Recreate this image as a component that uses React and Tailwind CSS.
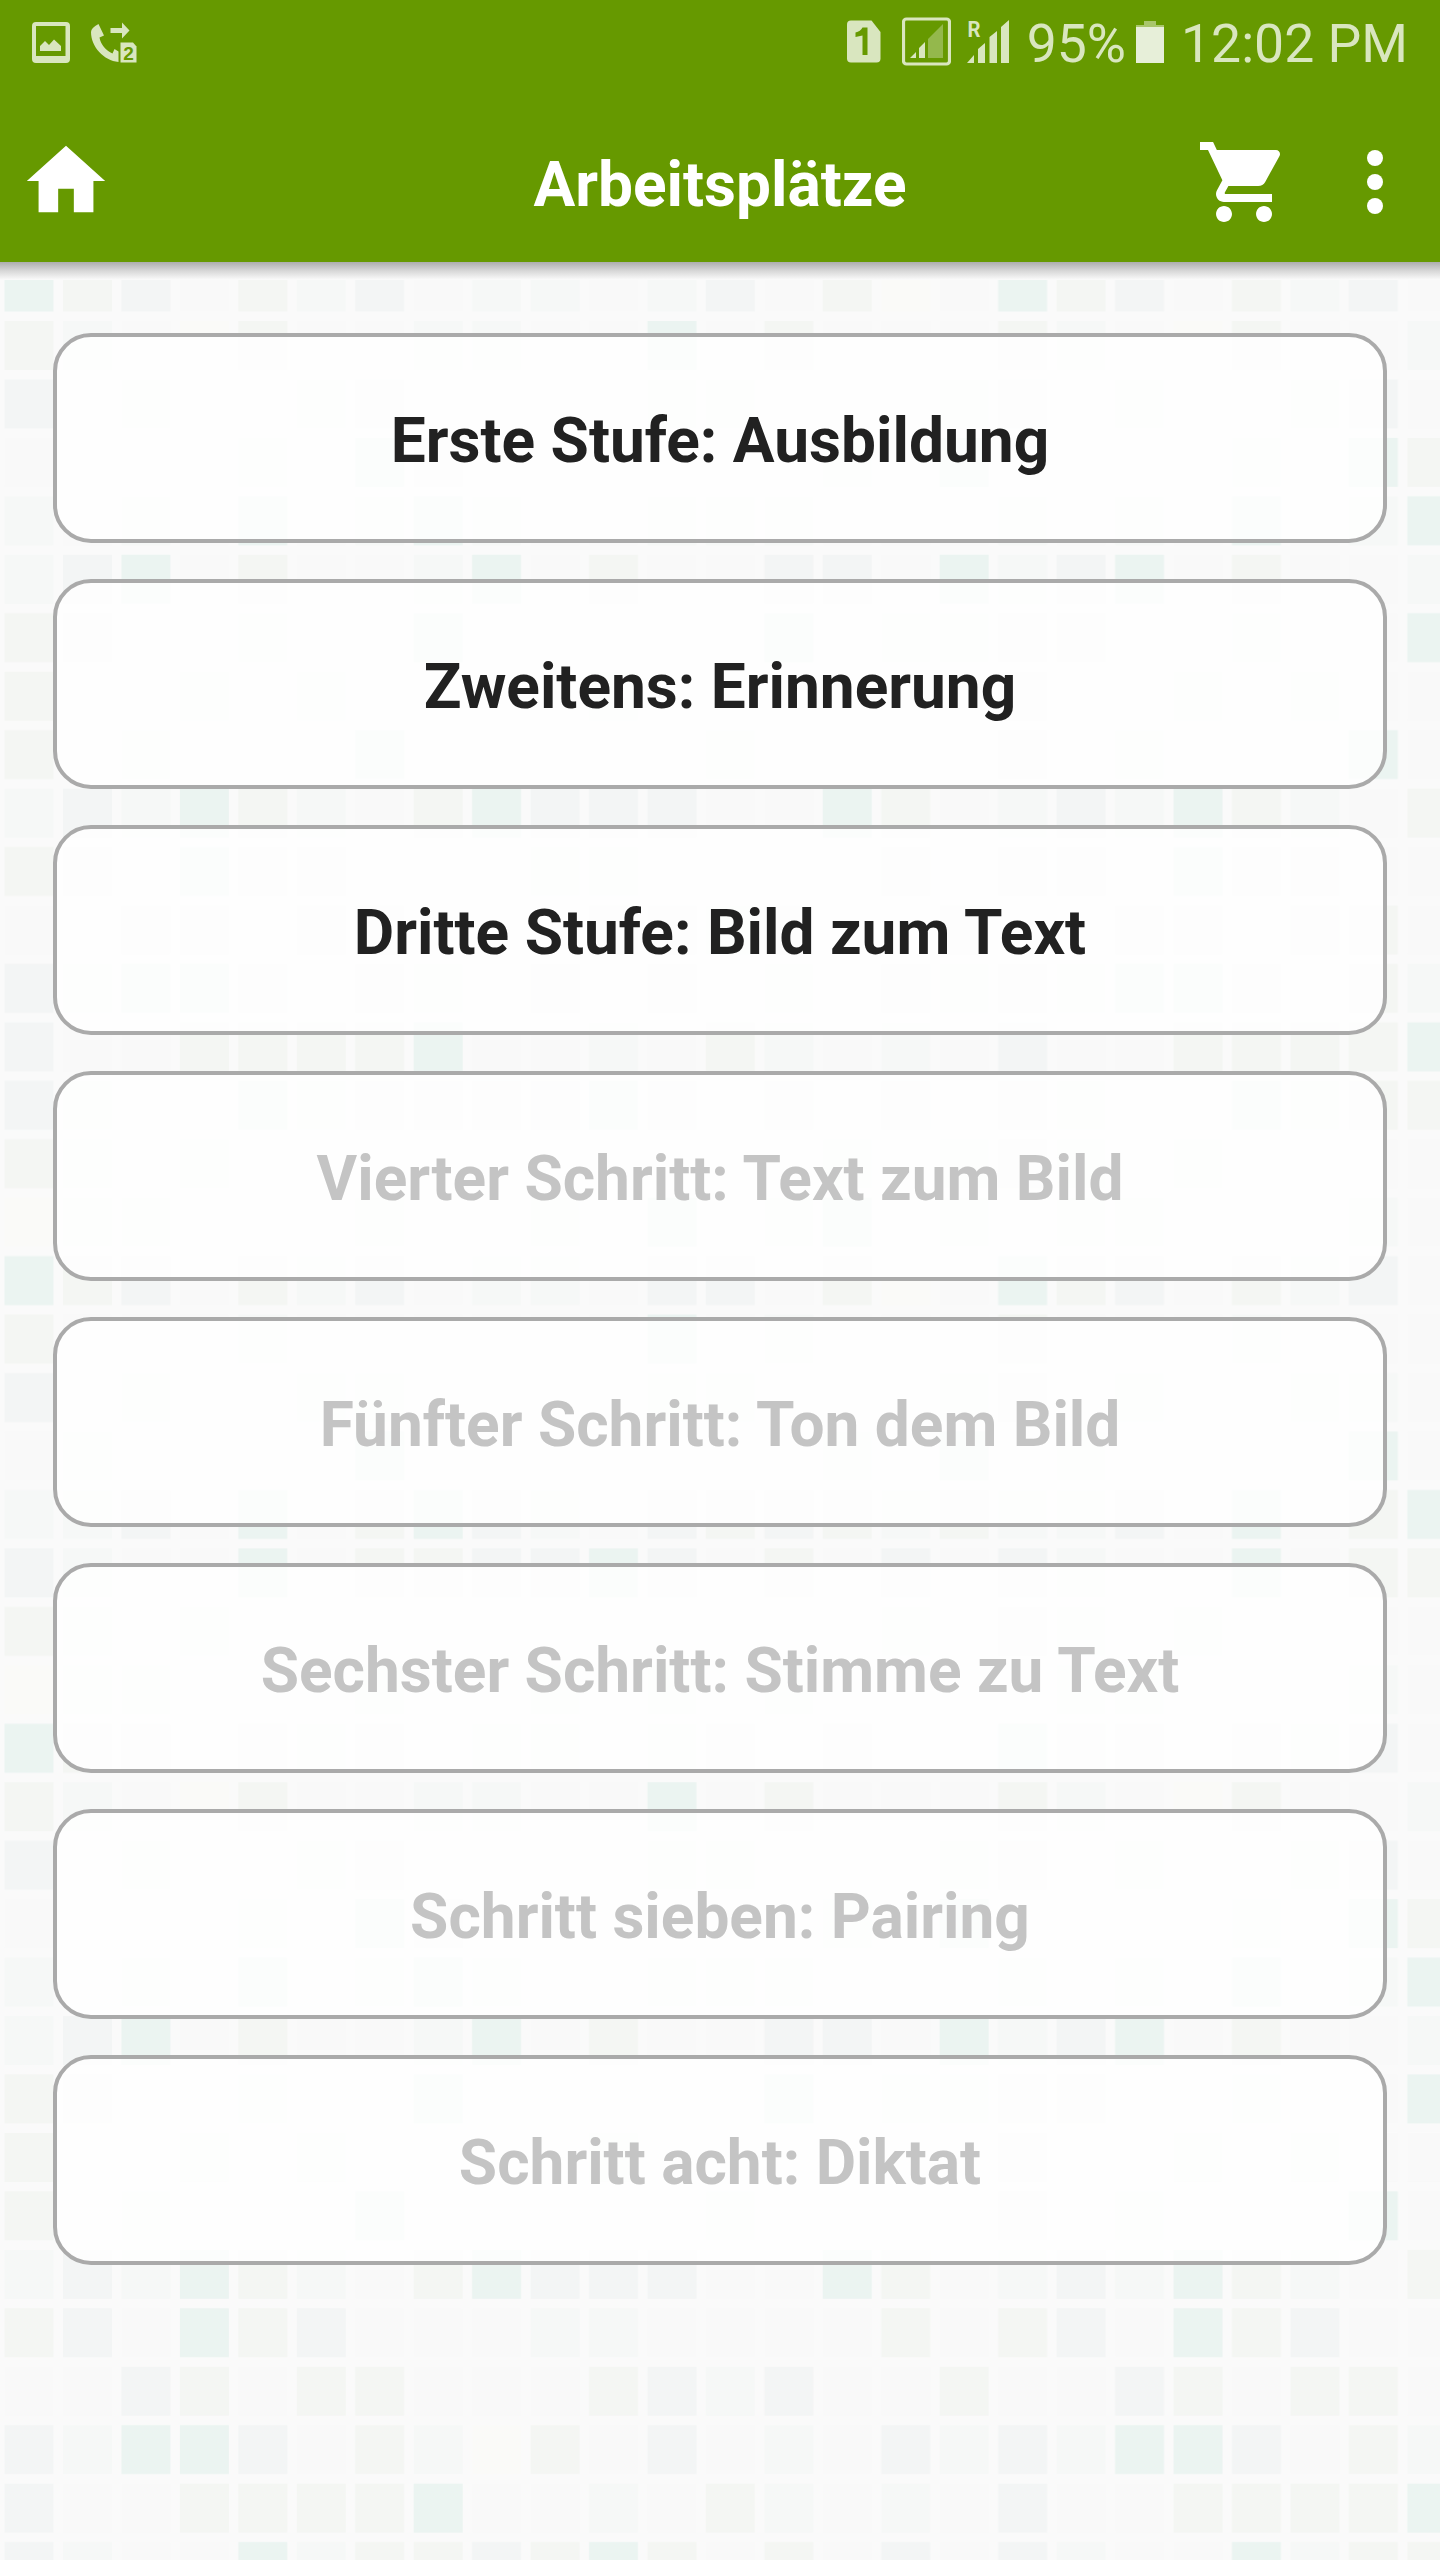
/**
 * Course steps screen: status bar, green toolbar and the list of steps
 * on top of a repeating mosaic background.
 */

const STEPS = [
	{ title: 'Erste Stufe: Ausbildung', unlocked: true },
	{ title: 'Zweitens: Erinnerung', unlocked: true },
	{ title: 'Dritte Stufe: Bild zum Text', unlocked: true },
	{ title: 'Vierter Schritt: Text zum Bild', unlocked: false },
	{ title: 'Fünfter Schritt: Ton dem Bild', unlocked: false },
	{ title: 'Sechster Schritt: Stimme zu Text', unlocked: false },
	{ title: 'Schritt sieben: Pairing', unlocked: false },
	{ title: 'Schritt acht: Diktat', unlocked: false },
];

// Mosaic: 17 columns x 25 rows, one letter per tile
const TILE = 58.45;
const TILE_COLORS = {
	T: '#ebf4f1',
	G: '#f3f5f5',
	E: '#f4f6f3',
	L: '#f6f8f7',
	Y: '#fafaf8',
	'.': '#f9f9f9',
};
const MOSAIC = [
	'TEG.ELG.LL.LG.EY.',
	'EL.YE..LL..T.E...',
	'G.L..LG....LL...L',
	'....L.TE......L.T',
	'L.L.T.LTL..LLL...',
	'LGT.E..LT.E..GG.T',
	'EE..L..T.....T.LL',
	'E..L.L....L......',
	'E.L...T.....L....',
	'LGLTEL.ETGGG..TE.',
	'EG.TEG...LL....E.',
	'..GE.EE...EGLG..E',
	'GLTTG.ELYE.G.L.GL',
	'G..EEEET..L.EL.L.',
	'GL..TLEEGETE.E.G.',
	'EL.L..........L.L',
	'YLL...L..L.T.LT.L',
	'TEG.ELG.LL.GG.EY.',
	'E...L......T.L...',
	'G.L..LL....LL...L',
	'.L....T.......L.T',
	'LLG.T.ETGL.GEGELE',
	'GL..T.EEGGTG.E.G.',
	'EL.L...........L.',
	'YLL...L..L.L.L...',
];

function Mosaic() {
	return (
		<svg className="absolute inset-0 h-full w-full" aria-hidden="true">
			<defs>
				<pattern
					id="mosaic"
					width={TILE * 17}
					height={TILE * 25}
					patternUnits="userSpaceOnUse">
					{MOSAIC.map((row, y) => row.split('').map((tile, x) => (
						<rect
							key={`${x}-${y}`}
							x={x * TILE + 4.5}
							y={y * TILE + 0.5}
							width="49"
							height="49"
							fill={TILE_COLORS[tile]}
						/>
					)))}
				</pattern>
			</defs>
			<rect width="100%" height="100%" fill="url(#mosaic)" />
		</svg>
	);
}

function StatusBar() {
	return (
		<div className="flex h-[84px] items-start justify-between pl-8 pr-[32px] text-[#d9e6bf]">
			<div className="flex pt-[22px] gap-[21px]">
				{/* Screenshot saved */}
				<svg className="h-[41px] w-[38px]" viewBox="0 0 38 41" fill="currentColor">
					<path fillRule="evenodd" d="M4 0h30q4 0 4 4v33q0 4-4 4H4q-4 0-4-4V4Q0 0 4 0zM4 4v30h29.500V4z" />
					<path d="M8 29v-5l5-5 4 4 5-5.500 7 6.500v5z" />
				</svg>
				{/* Forwarded call, SIM 2 */}
				<svg className="h-[41px] w-[46px]" viewBox="0 0 46 41" fill="currentColor">
					<path d="M7.500 2L13 13.500l-4.500 2C9.500 22 15 29 21.500 31.500L23.500 27l4 2.500V40C13 38.500 0 25 0 10q0-4 7.500-8z" />
					<path d="M19.500 6H31V.5l7.500 8-7.500 8V11H19.500z" />
					<path d="M29.500 20.500H42l3.500 4V40.500h-16z" />
					<text x="37.500" y="37.500" textAnchor="middle" className="fill-[#669900] font-['Liberation_Sans'] text-[19px] font-bold">2</text>
				</svg>
			</div>

			<div className="flex">
				{/* SIM 1 */}
				<svg className="mt-[20px] h-[43px] w-[34px]" viewBox="0 0 34 43" fill="currentColor">
					<path d="M4 0.500h20.500L33.500 12v26.500q0 4-4 4H4q-4 0-4-4V4.500q0-4 4-4z" />
					<path className="fill-[#669900]" d="M15.500 7.500h5V35h-5V15.500L8.500 17v-4.500q5-1 7-5z" />
				</svg>
				<svg className="ml-[20.500px] mt-[17px] h-[49px] w-[49px]" viewBox="0 0 49 49" fill="currentColor">
					<rect x="1.500" y="2" width="46" height="45" rx="3" fill="none" stroke="currentColor" strokeWidth="3.200" />
					<path d="M8 41l6-6v6zM17 41V31l6-6v16z" />
					<path className="opacity-40" d="M26 41V22L41 7v34z" />
				</svg>
				<svg className="ml-[16px] mt-[14px] h-[49px] w-[42px]" viewBox="0 -6 42 49" fill="currentColor">
					<text x="0.500" y="17" className="font-['Roboto'] text-[22px] font-bold" textLength="13" lengthAdjust="spacingAndGlyphs">R</text>
					<path d="M0 43l7-8v8zM11 43V29l7-6v20zM22.500 43V17l7.500-6v32zM34 43V7l8-7v43z" />
				</svg>
				<span className="ml-[18px] mt-[12px] text-[53.5px] leading-[63px]">95%</span>
				{/* Battery */}
				<svg className="ml-[10px] mt-[21px] h-[42px] w-[28px]" viewBox="0 0 28 42">
					<path className="fill-[#a9c66c]" d="M8 0h12v4h8v3H0V4h8z" />
					<rect className="fill-[#e7efd9]" y="6" width="28" height="36" />
				</svg>
				<span className="ml-[17px] mt-[12px] text-[53.5px] leading-[63px]">12:02 PM</span>
			</div>
		</div>
	);
}

function Toolbar() {
	return (
		<div className="grid h-[178px] grid-cols-[1fr_auto_1fr] items-start text-white">
			<button type="button" aria-label="Home" className="ml-[19px] mt-[50px] w-[94px]">
				<svg className="h-[94px] w-[94px]" viewBox="0 0 24 24" fill="currentColor">
					<path d="M10 20v-6h4v6h5v-8h3L12 3 2 12h3v8z" />
				</svg>
			</button>
			<h1 className="mt-[65px] text-[62.2px] font-bold leading-[72px]">Arbeitsplätze</h1>
			<div className="mr-[17px] mt-[50px] flex justify-end gap-[35px]">
				<button type="button" aria-label="Cart">
					<svg className="h-[96px] w-[96px]" viewBox="0 0 24 24" fill="currentColor">
						<path d="M7 18c-1.100 0-1.990.9-1.990 2S5.900 22 7 22s2-.9 2-2-.9-2-2-2zM1 2v2h2l3.600 7.590-1.350 2.450c-.16.28-.25.61-.25.96 0 1.100.9 2 2 2h12v-2H7.420c-.14 0-.25-.11-.25-.25l.03-.12.9-1.630h7.450c.75 0 1.410-.41 1.750-1.030l3.580-6.490c.08-.14.12-.31.12-.48 0-.55-.45-1-1-1H5.210l-.94-2H1zm16 16c-1.100 0-1.990.9-1.990 2s.89 2 1.990 2 2-.9 2-2-.9-2-2-2z" />
					</svg>
				</button>
				<button type="button" aria-label="More">
					<svg className="h-[96px] w-[96px]" viewBox="0 0 24 24" fill="currentColor">
						<circle cx="12" cy="6" r="2" />
						<circle cx="12" cy="12" r="2" />
						<circle cx="12" cy="18" r="2" />
					</svg>
				</button>
			</div>
		</div>
	);
}

function StepCard({ title, unlocked }) {
	return (
		<button
			type="button"
			disabled={!unlocked}
			className={`flex h-[210px] w-full items-center justify-center rounded-[38px] border-4 border-[#aaaaaa] bg-white/80 pt-[5px] text-[62.2px] font-bold leading-[72px] ${unlocked ? 'text-[#212121]' : 'text-[#c4c4c4]'}`}>
			{title}
		</button>
	);
}

export default function App() {
	return (
		<div className="flex h-[2560px] w-[1440px] flex-col overflow-hidden bg-[#fafafa] font-['Roboto',sans-serif]">
			<header className="h-[262px] shrink-0 bg-[#669900]">
				<StatusBar />
				<Toolbar />
			</header>

			<main className="relative flex-1">
				<Mosaic />
				{/* Toolbar shadow */}
				<div className="relative h-[18px] bg-linear-to-b from-[#adadad] via-[#d8d8d8] to-[#fbfbfb]" />
				<div className="relative flex flex-col gap-[36px] px-[53px] pt-[53px]">
					{STEPS.map((step) => (
						<StepCard key={step.title} {...step} />
					))}
				</div>
			</main>
		</div>
	);
}
